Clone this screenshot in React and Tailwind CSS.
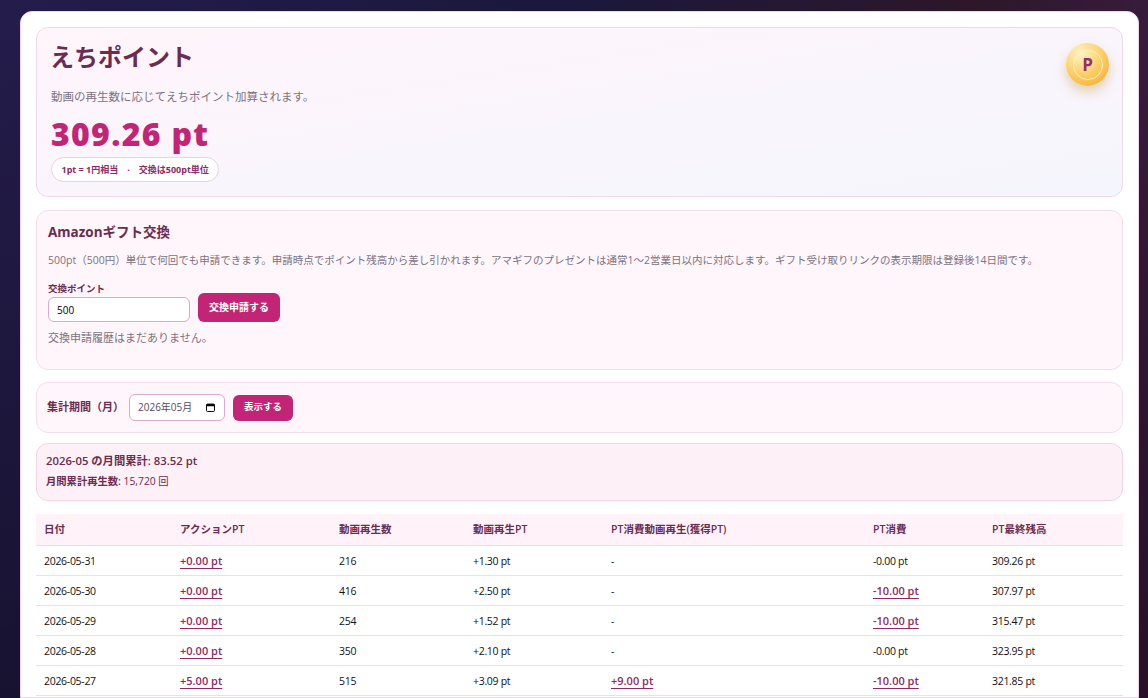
const FONT = "font-['Open_Sans','Noto_Sans_CJK_JP',sans-serif]";

const rows = [
  { date: "2026-05-31", action: "+0.00 pt", plays: "216", playPt: "+1.30 pt", bonus: "-", used: "-0.00 pt", usedLink: false, balance: "309.26 pt" },
  { date: "2026-05-30", action: "+0.00 pt", plays: "416", playPt: "+2.50 pt", bonus: "-", used: "-10.00 pt", usedLink: true, balance: "307.97 pt" },
  { date: "2026-05-29", action: "+0.00 pt", plays: "254", playPt: "+1.52 pt", bonus: "-", used: "-10.00 pt", usedLink: true, balance: "315.47 pt" },
  { date: "2026-05-28", action: "+0.00 pt", plays: "350", playPt: "+2.10 pt", bonus: "-", used: "-0.00 pt", usedLink: false, balance: "323.95 pt" },
  { date: "2026-05-27", action: "+5.00 pt", plays: "515", playPt: "+3.09 pt", bonus: "+9.00 pt", used: "-10.00 pt", usedLink: true, balance: "321.85 pt" },
];

const PtLink = ({ children }) => (
  <a className="text-[11px] font-semibold tracking-normal text-[#8e2a63] underline underline-offset-[3px]">{children}</a>
);

const App = () => {
  return (
    <div className={`${FONT} h-screen overflow-hidden bg-[linear-gradient(to_bottom,rgba(0,0,0,0),rgba(0,0,0,0.35)),linear-gradient(to_right,#241c4b,#1a183c_50%,#2d1729_85%,#381c3c)] px-5 pt-[11px]`}>
      <div className="min-h-full w-[1119px] rounded-t-xl border border-[#f3d3e6] bg-white px-[15px] pt-[15px]">
        <div className="relative h-[170px] rounded-xl border border-[#f0d9e8] bg-gradient-to-br from-[#fff5fb] to-[#f5f5fd] px-[14px] pt-[12px]">
          <h1 className="-ml-px text-[24px] leading-[34px] font-semibold text-[#6a2c4f]">えちポイント</h1>
          <p className="mt-[14px] text-[11.5px] leading-[18px] text-[#7c7280]">動画の再生数に応じてえちポイント加算されます。</p>
          <div className="mt-[7px] text-[32px] leading-[42px] font-extrabold tracking-[1.3px] text-[#c22576]">309.26 pt</div>
          <div className="mt-[2px] inline-flex h-[25px] items-center rounded-full border border-[#efcfe0] bg-white px-[9.5px] text-[9px] font-bold whitespace-pre text-[#8e2a63]">
            1pt = 1円相当　·　交換は500pt単位
          </div>
          <div className="absolute top-[15px] right-[13px] flex h-[43px] w-[43px] items-center justify-center rounded-full bg-[radial-gradient(circle_at_35%_25%,#fff3c9,#fcd26f_45%,#f3a523)] shadow-[0_6px_12px_rgba(190,140,40,0.35)]">
            <div className="flex h-[30px] w-[30px] items-center justify-center rounded-full border border-[#ffeebd] text-[17px] font-bold text-[#9a2c6a]">P</div>
          </div>
        </div>

        <div className="mt-[13px] h-[160px] rounded-xl border border-[#f5deeb] bg-[#fff6fc] px-[11px] pt-[12px]">
          <h2 className="text-[13.5px] leading-[18px] font-bold text-[#6a2c4f]">Amazonギフト交換</h2>
          <p className="mt-[10px] text-[10.5px] leading-[18px] text-[#7c7280]">500pt（500円）単位で何回でも申請できます。申請時点でポイント残高から差し引かれます。アマギフのプレゼントは通常1〜2営業日以内に対応します。ギフト受け取りリンクの表示期限は登録後14日間です。</p>
          <div className="mt-[13px] flex items-end gap-2">
            <label className="block">
              <span className="block text-[9.5px] leading-[13px] font-bold text-[#6a2c4f]">交換ポイント</span>
              <input defaultValue="500" className="mt-[2px] block h-[25px] w-[142px] rounded-md border border-[#dba9c9] bg-white px-2 text-[10px] text-black" />
            </label>
            <button className="h-[29px] w-[82px] rounded-md bg-[#c22576] text-[10px] font-bold text-white">交換申請する</button>
          </div>
          <p className="mt-[7px] text-[11px] leading-[18px] text-[#7c7280]">交換申請履歴はまだありません。</p>
        </div>

        <div className="mt-[12px] flex h-[51px] items-center rounded-xl border border-[#f5deeb] bg-[#fff6fc] px-[10px]">
          <span className="text-[11px] font-bold text-[#6a2c4f]">集計期間（月）</span>
          <div className="ml-[5px] flex h-[27px] w-[96px] items-center justify-between rounded-md border border-[#dba9c9] bg-white pr-[9px] pl-[8px] text-[10px] text-[#5b4a55]">
            <span>2026年05月</span>
            <svg width="9" height="9" viewBox="0 0 10 10" className="text-black">
              <rect x="0.6" y="1.2" width="8.8" height="8.2" rx="1" fill="none" stroke="currentColor" strokeWidth="1.1" />
              <rect x="0.6" y="1.2" width="8.8" height="2.4" fill="currentColor" />
            </svg>
          </div>
          <button className="ml-2 h-[26px] w-[60px] rounded-md bg-[#c22576] text-[9.5px] font-bold text-white">表示する</button>
        </div>

        <div className="mt-[10px] h-[58px] rounded-xl border border-[#f3d3e4] bg-[#fdf0f7] px-[9px] pt-[6px] text-[#6a2c4f]">
          <div className="text-[11.3px] leading-[21px] font-semibold">2026-05 の月間累計: 83.52 pt</div>
          <div className="text-[10.3px] leading-[21px]"><span className="font-semibold">月間累計再生数:</span> 15,720 回</div>
        </div>

        <table className="mt-[13px] w-[1087px] table-fixed border-collapse text-[10.5px] tracking-[-0.3px] text-[#111]">
          <colgroup>
            <col className="w-[136px]" />
            <col className="w-[159px]" />
            <col className="w-[134px]" />
            <col className="w-[138px]" />
            <col className="w-[262px]" />
            <col className="w-[119px]" />
            <col className="w-[139px]" />
          </colgroup>
          <thead>
            <tr className="h-[31px] border-b border-[#efdbe6] bg-[#fff3f9] text-left text-[10.5px] font-semibold tracking-normal text-[#6a2c4f]">
              <th className="px-2 pt-px font-semibold">日付</th>
              <th className="px-2 pt-px font-semibold">アクションPT</th>
              <th className="px-2 pt-px font-semibold">動画再生数</th>
              <th className="px-2 pt-px font-semibold">動画再生PT</th>
              <th className="px-2 pt-px font-semibold">PT消費動画再生(獲得PT)</th>
              <th className="px-2 pt-px font-semibold">PT消費</th>
              <th className="px-2 pt-px font-semibold">PT最終残高</th>
            </tr>
          </thead>
          <tbody>
            {rows.map((row) => (
              <tr key={row.date} className="h-[30px] border-b border-[#eedfe7]">
                <td className="px-2 pt-[3px]">{row.date}</td>
                <td className="px-2 pt-[3px]"><PtLink>{row.action}</PtLink></td>
                <td className="px-2 pt-[3px]">{row.plays}</td>
                <td className="px-2 pt-[3px]">{row.playPt}</td>
                <td className="px-2 pt-[3px]">{row.bonus === "-" ? "-" : <PtLink>{row.bonus}</PtLink>}</td>
                <td className="px-2 pt-[3px]">{row.usedLink ? <PtLink>{row.used}</PtLink> : row.used}</td>
                <td className="px-2 pt-[3px]">{row.balance}</td>
              </tr>
            ))}
          </tbody>
        </table>
      </div>
    </div>
  );
};

export default App;
